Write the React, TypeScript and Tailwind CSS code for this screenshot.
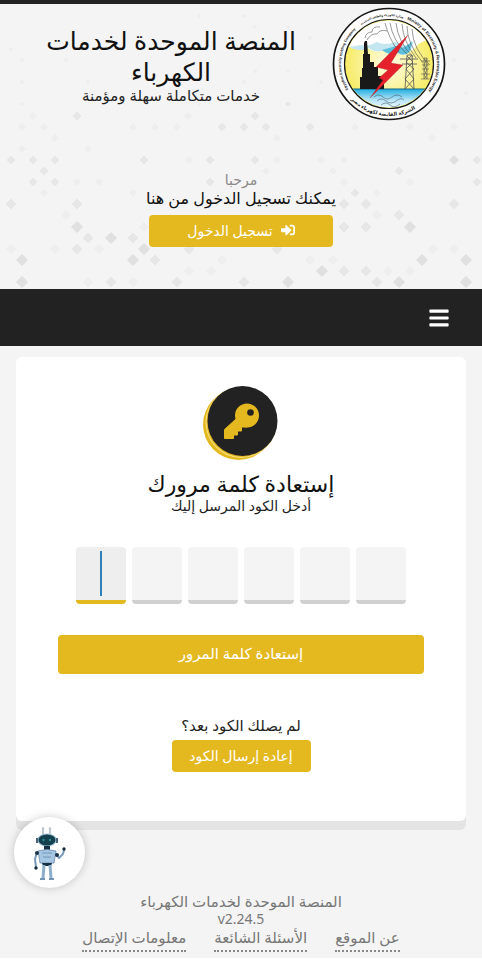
import { FaBars, FaSignInAlt } from "react-icons/fa";

// x, y and strength (1 = faint, 3 = strong) of each background diamond
const diamonds: [number, number, number][] = [
  [199, 16, 1], [244, 16, 1], [11, 49, 1], [22, 60, 1], [66, 60, 1], [255, 27, 1], [288, 27, 1], [310, 38, 1],
  [255, 71, 1], [288, 71, 1], [22, 82, 1], [88, 82, 1], [244, 82, 1], [22, 104, 1], [199, 104, 1], [288, 104, 2],
  [33, 116, 1], [77, 116, 2], [188, 116, 1], [255, 116, 2], [22, 127, 1], [44, 127, 1], [133, 127, 1], [155, 127, 1],
  [177, 127, 1], [222, 127, 2], [244, 127, 2], [266, 127, 2], [310, 127, 2], [355, 127, 1], [410, 127, 1], [454, 127, 1],
  [55, 138, 1], [277, 138, 1], [432, 138, 1], [88, 149, 1], [22, 149, 1], [454, 60, 1], [466, 93, 1], [321, 82, 1],
  [11, 160, 2], [33, 160, 2], [55, 160, 2], [144, 160, 2], [189, 160, 1], [210, 160, 2], [255, 160, 2], [277, 160, 1],
  [321, 160, 1], [344, 160, 1], [454, 160, 3], [477, 160, 2], [44, 171, 2], [266, 171, 1], [333, 171, 1], [399, 171, 2],
  [33, 182, 2], [55, 182, 2], [77, 182, 1], [99, 182, 1], [210, 182, 2], [344, 182, 1], [410, 182, 1], [477, 182, 2],
  [44, 193, 1], [133, 193, 1], [355, 193, 2], [377, 193, 1], [11, 204, 2], [77, 204, 2], [344, 204, 2], [366, 204, 2],
  [454, 204, 2], [66, 215, 1], [399, 215, 2], [377, 215, 1], [77, 227, 3], [144, 227, 1], [344, 227, 2], [366, 227, 2],
  [410, 227, 3], [88, 238, 2], [111, 238, 3], [133, 238, 2], [11, 249, 1], [55, 249, 1], [77, 249, 2], [99, 249, 1],
  [144, 249, 3], [189, 249, 2], [277, 249, 2], [433, 249, 1], [454, 249, 1], [22, 260, 3], [133, 260, 3], [155, 260, 2],
  [222, 260, 1], [310, 260, 1], [333, 260, 1], [422, 260, 3], [466, 260, 3], [189, 271, 1], [211, 271, 1], [322, 271, 3],
  [344, 271, 2], [366, 271, 2], [388, 271, 1], [410, 271, 1], [22, 282, 3], [88, 282, 1], [111, 282, 2], [133, 282, 1],
  [177, 282, 2], [244, 282, 2], [288, 282, 3], [377, 282, 2], [399, 282, 3], [466, 282, 3],
];

const tones = ["#f4f4f4", "#eeeeee", "#e7e7e7", "#e0e0e0"];

function Pattern() {
  return (
    <svg className="absolute inset-0 h-full w-full" viewBox="0 4 482 285" preserveAspectRatio="xMidYMid slice" aria-hidden="true">
      {diamonds.map(([x, y, s], i) => {
        const r = (y < 110 ? 2 : y < 200 ? 3.5 : 4.5) + (s - 1) * 0.5;
        return <path key={i} d={`M${x} ${y - r}L${x + r} ${y}L${x} ${y + r}L${x - r} ${y}Z`} fill={tones[s]} stroke={tones[s]} strokeLinejoin="round" />;
      })}
    </svg>
  );
}

function MinistryLogo() {
  return (
    <svg className="h-[114px] w-[114px] shrink-0" viewBox="0 0 114 114" role="img" aria-label="وزارة الكهرباء والطاقة المتجددة">
      <defs>
        <clipPath id="disc"><circle cx="57" cy="57" r="43.5" /></clipPath>
        <radialGradient id="sky">
          <stop offset="0" stopColor="#fffde8" />
          <stop offset="1" stopColor="#f6eb63" />
        </radialGradient>
        <linearGradient id="sea" x1="0" y1="0" x2="0" y2="1">
          <stop offset="0" stopColor="#20aee0" />
          <stop offset="0.5" stopColor="#b9e5f7" />
          <stop offset="1" stopColor="#fff" />
        </linearGradient>
        <path id="ringRight" d="M75 12.500A48 48 0 0 1 88 93.500" />
        <path id="ringLeft" d="M16.300 82.400A48 48 0 0 1 29.500 17.700" />
        <path id="ringTop" d="M26 20.400A48 48 0 0 1 75 12.500" />
        <path id="ringBottom" d="M10 79A52 52 0 0 0 96 91.500" />
      </defs>
      <circle cx="57" cy="57" r="55.5" fill="#fff" stroke="#171717" strokeWidth="1.7" />
      <circle cx="57" cy="57" r="44.5" fill="url(#sky)" stroke="#171717" strokeWidth="1.2" />
      <g clipPath="url(#disc)">
        <path d="M12 12H102V34Q91 31 83 41Q74 49 66 44Q60 48 53 43Q43 47 36 41Q27 44 12 38Z" fill="#fff" />
        <path d="M17 40Q28 46 37 41Q44 47 52 43Q60 50 66 46Q73 51 79 43L82 34Q72 42 64 35Q52 39 45 35Q36 40 29 38Z" fill="#c3e6f1" />
        <path d="M50 43Q59 50 66 46Q73 50 78 44L80 34Q71 44 64 39Z" fill="#5fc0de" />
        <rect x="10" y="82" width="94" height="22" fill="url(#sea)" />
        <path d="M10 82H104" stroke="#156785" strokeWidth="1" />
        <path d="M53 16Q57 32 67 45M58 16Q61 34 75 47M64 16Q66 35 81 50M70 17Q71 34 84 51M75 19Q75 37 91 56M80 22Q81 43 98 58" fill="none" stroke="#343434" strokeWidth="0.5" />
        <path d="M73 82L75 48H80L82 82M73 82L82 72L74 62L81 55L75 49M82 82L73 72L82 62L74 55L80 48M68 52H86M70 57H85" fill="none" stroke="#555" strokeWidth="0.8" />
        <path d="M92 72V51H95V72M89 54H98M90 58H97M90 62H97M89 67H98M89 72H98M92 51L95 58L92 63L95 68L92 72M95 51L92 58L95 63L92 68L95 72" fill="none" stroke="#555" strokeWidth="0.6" />
        <path d="M28 82V70H30V61H31V47H32V36L33 34H35L36 47H38V55H42V60H46V69H52V82Z" fill="#191919" />
        <path d="M33 31Q34 25 40 25Q40 19 48 20M35 33Q39 26 45 27Q48 22 55 24" fill="none" stroke="#555" strokeWidth="0.6" />
        <path d="M42 90Q47 86 51 90T60 90T70 90M45 94Q49 90 54 94T64 94T72 93M49 98Q54 94 58 98T68 97" fill="none" stroke="#4f606b" strokeWidth="0.6" />
        <path d="M76 28L44 60L56 63L47 71L51 73L38 91L71 58L59 56Z" fill="#e5212b" stroke="#98272b" strokeWidth="0.3" />
      </g>
      <g fill="#171717" fontFamily="'Liberation Sans', 'DejaVu Sans', sans-serif" fontWeight="700">
        <text direction="ltr" fontSize="4.2"><textPath href="#ringRight">Ministry of Electricity &amp; Renewable Energy</textPath></text>
        <text direction="ltr" fontSize="3.6"><textPath href="#ringLeft">Egyptian Electricity Holding Company</textPath></text>
        <text direction="rtl" textAnchor="middle" fontSize="2.8"><textPath href="#ringTop" startOffset="50%">وزارة الكهرباء والطاقة المتجددة</textPath></text>
        <text direction="rtl" textAnchor="middle" fontSize="5"><textPath href="#ringBottom" startOffset="50%">الشركة القابضة لكهرباء مصر</textPath></text>
      </g>
    </svg>
  );
}

function KeyIcon() {
  return (
    <svg className="mx-auto h-[76px] w-[76px]" viewBox="0 0 76 76" aria-hidden="true">
      <circle cx="35.5" cy="39.5" r="35.5" fill="#e4b81f" />
      <circle cx="38" cy="37.5" r="35.5" fill="#f6df82" />
      <circle cx="38.5" cy="37" r="35" fill="#e4b81f" />
      <circle cx="39.5" cy="36" r="35" fill="#222" />
      <circle cx="44" cy="30.5" r="12" fill="#e4b81f" />
      <path d="M33 34L21.500 44.500V53.500H30.500V50H34.500V46H38.500V42H44L50 37L40 27Z" fill="#e4b81f" stroke="#e4b81f" strokeLinejoin="round" />
      <circle cx="47.500" cy="27.500" r="3.300" fill="#222" />
    </svg>
  );
}

function Robot() {
  return (
    <svg className="h-[54px] w-[34px]" viewBox="0 0 34 54" aria-hidden="true">
      <path d="M10 9V3M17 9V3" stroke="#8296a6" strokeWidth="1" />
      <circle cx="10" cy="2.500" r="1.300" fill="#b8c6d1" />
      <circle cx="17" cy="2.500" r="1.300" fill="#b8c6d1" />
      <ellipse cx="14" cy="14" rx="10" ry="6.500" fill="#9bbbd0" />
      <ellipse cx="14" cy="14" rx="8.500" ry="5.500" fill="#14404e" />
      <path d="M4 12V17M24 12V17" stroke="#4a6478" strokeWidth="2" />
      <circle cx="10.500" cy="14" r="1.200" fill="#2c8b91" />
      <circle cx="17" cy="14" r="1.200" fill="#2c8b91" />
      <path d="M11 20H17V24H11Z" fill="#172f43" />
      <path d="M5 25Q14 22 23 25L21 37H7Z" fill="#a6c6e2" stroke="#6c8dad" strokeWidth="0.800" />
      <path d="M9 27H19M10 31H18" stroke="#638baf" strokeWidth="0.800" />
      <path d="M4 26L2 33L3 41" fill="none" stroke="#7899b8" strokeWidth="2" />
      <path d="M23 28L26 32L30 28L31 24" fill="none" stroke="#7899b8" strokeWidth="2" />
      <circle cx="4" cy="27" r="2" fill="#1b344a" />
      <circle cx="24" cy="29" r="2" fill="#1b344a" />
      <circle cx="3" cy="42" r="1.700" fill="#172b3c" />
      <circle cx="31" cy="23" r="1.700" fill="#172b3c" />
      <path d="M9 37H19L18 40H10Z" fill="#172f43" />
      <path d="M11 39L10 52M17 39L18 52" stroke="#8daecb" strokeWidth="3" />
      <path d="M7 53H12M16 53H21" stroke="#7595b2" strokeWidth="2" />
    </svg>
  );
}

const footerLinks = ["عن الموقع", "الأسئلة الشائعة", "معلومات الإتصال"];

export default function App() {
  return (
    <div dir="rtl" className="min-h-screen bg-white font-['Noto_Sans','DejaVu_Sans',sans-serif] text-[#222]">
      <div className="bg-[#f4f4f4]">
        <header className="relative h-[289px] border-t-4 border-[#222]">
          <Pattern />
          <div className="relative">
            <div className="flex gap-[26px] px-9 pt-[3px]">
              <MinistryLogo />
              <div className="flex-1 pt-[18px] text-center">
                <h1 className="text-[25px] leading-[31px] text-[#111]">المنصة الموحدة لخدمات الكهرباء</h1>
                <p className="text-[15px] leading-4">خدمات متكاملة سهلة ومؤمنة</p>
              </div>
            </div>
            <div className="flex flex-col items-center pt-[50px] text-center">
              <p className="text-[14px] leading-[18px] text-[#888]">مرحبا</p>
              <p className="text-[16px] leading-[18px] text-[#111]">يمكنك تسجيل الدخول من هنا</p>
              <button className="mt-2 flex h-8 w-[184px] items-center justify-center gap-2 rounded bg-[#e4b81f] pb-[2px] text-[14px] text-white">
                <FaSignInAlt className="size-[14px]" />
                تسجيل الدخول
              </button>
            </div>
          </div>
        </header>

        <nav className="flex h-[57px] items-center bg-[#222] px-8">
          <button aria-label="القائمة" className="text-white">
            <FaBars className="size-[22px]" />
          </button>
        </nav>

        <main className="px-4 pt-[11px]">
          <section className="flex h-[464px] flex-col rounded-md bg-white px-[42px] pt-[28px] text-center shadow-[0_9px_0_#e4e4e4]">
            <KeyIcon />
            <h2 className="mt-2 text-[22px] leading-7 text-[#111]">إستعادة كلمة مرورك</h2>
            <p className="text-[14px] leading-[18px]">أدخل الكود المرسل إليك</p>
            <form onSubmit={(e) => e.preventDefault()}>
              <div dir="ltr" className="mt-8 flex justify-center gap-[6px]">
                {[1, 2, 3, 4, 5, 6].map((n) => (
                  <div key={n} className="relative">
                    <input
                      aria-label={`رقم الكود ${n}`}
                      inputMode="numeric"
                      maxLength={1}
                      className={
                        n === 1
                          ? "block h-[57px] w-[50px] rounded border-b-4 border-[#e4b81f] bg-[#eee] text-center text-2xl outline-none"
                          : "block h-[57px] w-[50px] rounded border-b-4 border-[#d0d0d0] bg-[#f4f4f4] text-center text-2xl outline-none"
                      }
                    />
                    {n === 1 && <span className="absolute top-1 left-6 h-[45px] w-[2px] bg-[#2f7fb8]" />}
                  </div>
                ))}
              </div>
              <button className="mt-[31px] h-[39px] w-full rounded bg-[#e4b81f] pb-[2px] text-[15px] text-white">إستعادة كلمة المرور</button>
            </form>
            <p className="mt-[41px] text-[15px] leading-5">لم يصلك الكود بعد؟</p>
            <button className="mx-auto mt-[5px] h-8 w-[139px] rounded bg-[#e4b81f] pb-[2px] text-[14px] text-white">إعادة إرسال الكود</button>
          </section>
        </main>

        <footer className="pt-[71px] pb-[6px] text-center text-[15px] leading-[18px] text-[#777]">
          <p>المنصة الموحدة لخدمات الكهرباء</p>
          <p dir="ltr" className="text-[14px] leading-[18px]">v2.24.5</p>
          <ul className="flex justify-center gap-7">
            {footerLinks.map((label) => (
              <li key={label}>
                <a href="#" className="block border-b-2 border-dotted border-[#888] pb-1">{label}</a>
              </li>
            ))}
          </ul>
        </footer>
      </div>

      <button aria-label="المساعد الآلي" className="fixed bottom-[72px] left-[14px] flex size-[71px] items-center justify-center rounded-full bg-white shadow-[0_0_10px_rgba(0,0,0,0.2)]">
        <Robot />
      </button>
    </div>
  );
}
